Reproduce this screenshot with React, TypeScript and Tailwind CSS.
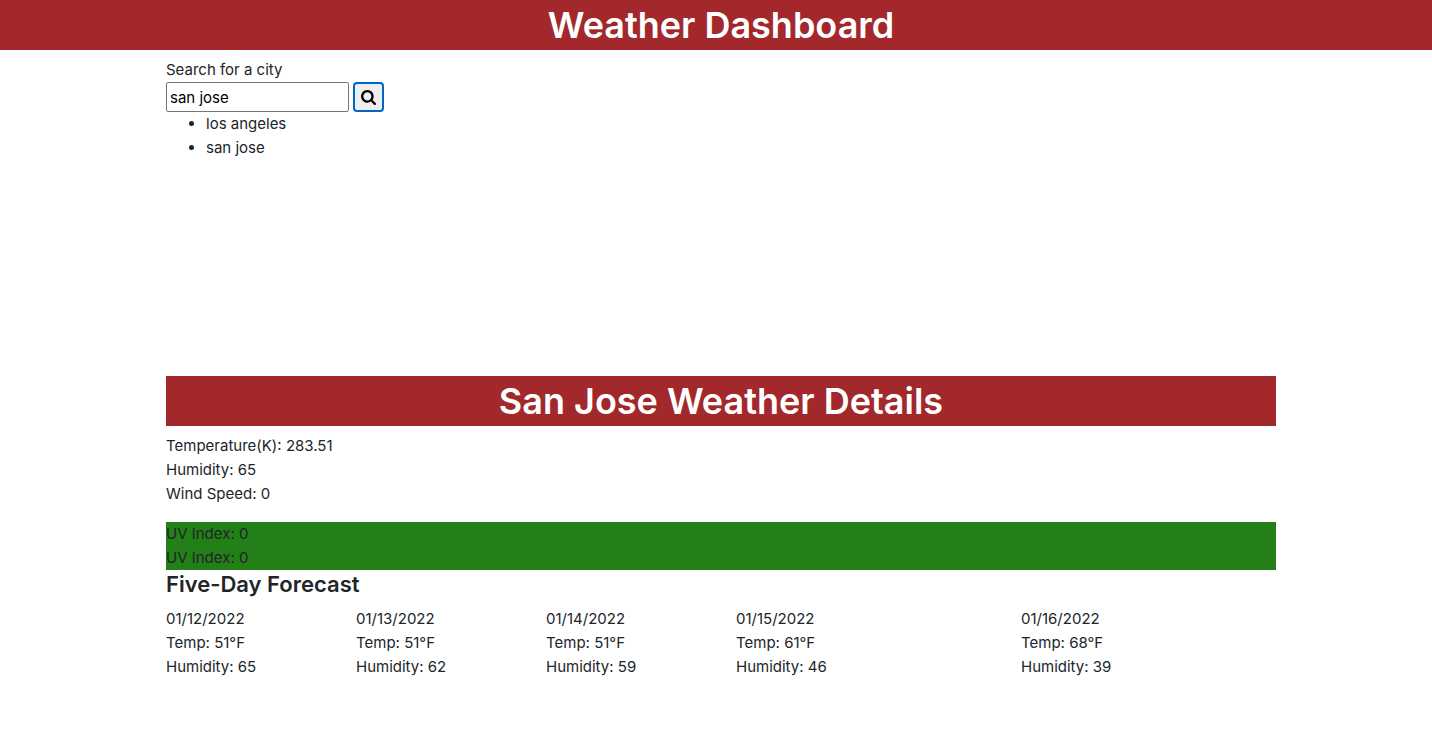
import { useState } from "react";

const history = ["los angeles", "san jose"];

const forecast = [
  { date: "01/12/2022", temp: 51, humidity: 65, span: "col-span-2" },
  { date: "01/13/2022", temp: 51, humidity: 62, span: "col-span-2" },
  { date: "01/14/2022", temp: 51, humidity: 59, span: "col-span-2" },
  { date: "01/15/2022", temp: 61, humidity: 46, span: "col-span-3" },
  { date: "01/16/2022", temp: 68, humidity: 39, span: "col-span-3" },
];

function SearchIcon() {
  return (
    <svg viewBox="0 128 1664 1664" className="size-[15px]" fill="currentColor" aria-hidden="true">
      <path d="M1152 832q0-185-131.5-316.5T704 384 387.5 515.5 256 832t131.5 316.5T704 1280t316.5-131.5T1152 832zm512 832q0 52-38 90t-90 38q-54 0-90-38l-343-342q-179 124-399 124-143 0-273.5-55.5t-225-150-150-225T0 832t55.5-273.5 150-225 225-150T704 128t273.5 55.5 225 150 150 225T1408 832q0 220-124 399l343 343q37 37 37 90z" />
    </svg>
  );
}

export default function App() {
  const [city, setCity] = useState("san jose");

  return (
    <div className="bg-white font-['Inter','Liberation_Sans',sans-serif] text-[15px] leading-[24px] text-[#212529]">
      <header className="bg-[#a2282b] pl-[10px] text-center text-white">
        <h1 className="text-4xl leading-[50px] font-semibold">Weather Dashboard</h1>
      </header>

      <div className="pl-[10px]">
        <main className="mx-auto max-w-[1140px] px-[15px] pt-2">
          <section className="min-h-[318px]">
            <form onSubmit={(e) => e.preventDefault()}>
              <label htmlFor="city" className="block">
                Search for a city
              </label>
              <div className="flex gap-1">
                <input
                  id="city"
                  type="text"
                  value={city}
                  onChange={(e) => setCity(e.target.value)}
                  className="h-[30px] w-[183px] rounded-[2px] border border-[#767676] bg-white px-[3px] text-black outline-none"
                />
                <button
                  type="submit"
                  aria-label="Search"
                  className="flex h-[30px] w-[31px] items-center justify-center rounded-[4px] border-2 border-[#0067c8] bg-[#efefef] text-black"
                >
                  <SearchIcon />
                </button>
              </div>
            </form>
            <ul className="list-disc pl-10">
              {history.map((name) => (
                <li key={name}>{name}</li>
              ))}
            </ul>
          </section>

          <section>
            <h2 className="mb-2 bg-[#a2282b] text-center text-4xl leading-[50px] font-semibold text-white">
              San Jose Weather Details
            </h2>
            <p>Temperature(K): 283.51</p>
            <p>Humidity: 65</p>
            <p className="mb-4">Wind Speed: 0</p>
            <div className="bg-[#237f17]">
              <p>UV Index: 0</p>
              <p>UV Index: 0</p>
            </div>
          </section>

          <section>
            <h3 className="mb-2 text-[22px] leading-[29px] font-semibold">Five-Day Forecast</h3>
            <div className="-mx-[15px] grid grid-cols-12">
              {forecast.map((day) => (
                <div key={day.date} className={`${day.span} px-[15px]`}>
                  <p>{day.date}</p>
                  <p>Temp: {day.temp}°F</p>
                  <p>Humidity: {day.humidity}</p>
                </div>
              ))}
            </div>
          </section>
        </main>
      </div>
    </div>
  );
}
